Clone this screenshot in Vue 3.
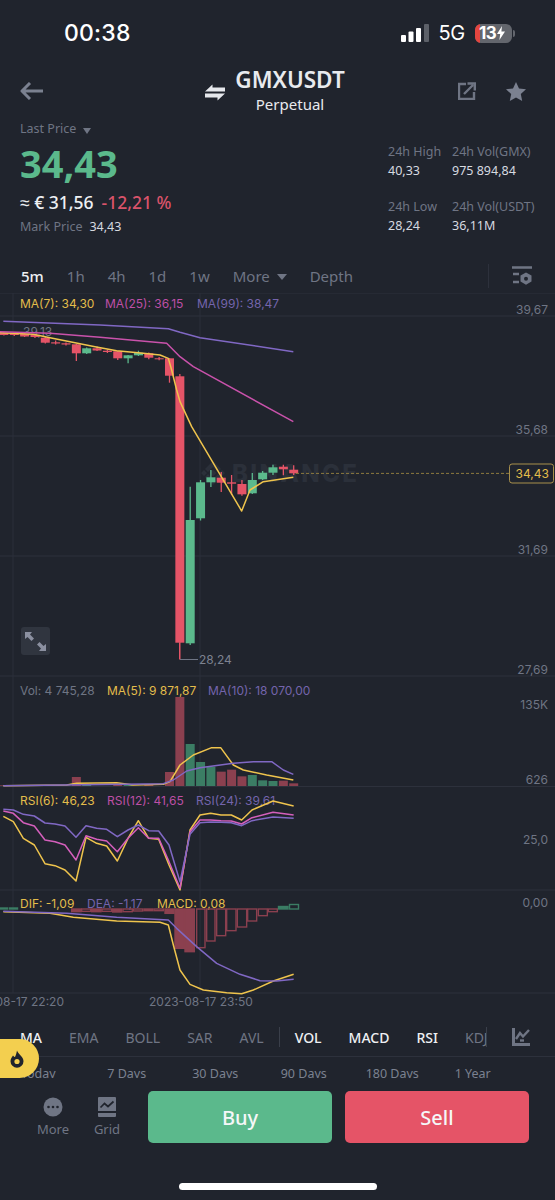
<template>
  <div class="screen">
    <div class="status">
      <span class="time">00:38</span>
      <div class="status-right">
        <svg class="signal" viewBox="0 0 28 18" width="28" height="18">
          <rect x="0" y="11" width="5" height="7" rx="1" fill="#fff" />
          <rect x="7.5" y="7.5" width="5" height="10.5" rx="1" fill="#fff" />
          <rect x="15" y="4" width="5" height="14" rx="1" fill="#fff" />
          <rect x="23" y="0" width="5" height="18" rx="1" fill="#5c6068" />
        </svg>
        <span class="net">5G</span>
        <div class="battery">
          <span class="battery-low"></span>
          <span class="battery-text">13</span>
          <svg viewBox="0 0 8 14" width="8" height="14"><path d="M5 0 L0 8 H3.2 L2.4 14 L8 5.5 H4.4 Z" fill="#fff" /></svg>
        </div>
        <span class="battery-nub"></span>
      </div>
    </div>

    <header class="top">
      <svg class="back" viewBox="0 0 24 18" width="24" height="18">
        <path d="M23 9 H2 M10 1 L2 9 L10 17" fill="none" stroke="#7b8190" stroke-width="3" stroke-linejoin="round" />
      </svg>
      <div class="title-wrap">
        <svg class="swap" viewBox="0 0 20 17" width="20" height="17">
          <path d="M0 7.4 L7.5 0.5 V3.4 H20 V7.4 Z M20 9.6 L12.5 16.5 V13.6 H0 V9.6 Z" fill="#e6e8ec" />
        </svg>
        <div class="title-text">
          <div class="symbol">GMXUSDT</div>
          <div class="kind">Perpetual</div>
        </div>
      </div>
      <div class="top-actions">
        <svg viewBox="0 0 18 18" width="18" height="18">
          <path d="M8 2 H1 V17 H16 V10" fill="none" stroke="#6f7584" stroke-width="2.4" />
          <path d="M6 12 L15 3 M9.5 1.5 H16.8 V8.5" fill="none" stroke="#6f7584" stroke-width="2.4" />
        </svg>
        <svg viewBox="0 0 20 19" width="20" height="19">
          <path d="M10 0 L13 6.4 L20 7.2 L14.8 12 L16.2 19 L10 15.5 L3.8 19 L5.2 12 L0 7.2 L7 6.4 Z" fill="#7b8190" />
        </svg>
      </div>
    </header>

    <section class="price">
      <div class="price-left">
        <div class="last-label">Last Price <i class="tri"></i></div>
        <div class="last-value">34,43</div>
        <div class="fiat-row"><span class="fiat">≈ € 31,56</span><span class="change">-12,21 %</span></div>
        <div class="mark-row"><span class="mark-label">Mark Price</span><span class="mark-value">34,43</span></div>
      </div>
      <div class="stats">
        <div v-for="s in stats" :key="s.label" class="stat">
          <div class="stat-label">{{ s.label }}</div>
          <div class="stat-value">{{ s.value }}</div>
        </div>
      </div>
    </section>

    <nav class="tabs">
      <span v-for="t in intervals" :key="t" class="tab" :class="{ active: t === '5m' }">{{ t }}</span>
      <span class="tab more">More <i class="tri big"></i></span>
      <span class="tab">Depth</span>
      <span class="tab-sep"></span>
      <svg class="tab-icon" viewBox="0 0 20 20" width="20" height="20">
        <path d="M0 1.5 H20 M1 8 H7 M1 16 H7" stroke="#6f7584" stroke-width="2.6" fill="none" />
        <path d="M14 6.5 L19.5 9.5 V15.5 L14 18.8 L8.5 15.5 V9.5 Z" fill="#6f7584" />
        <circle cx="14" cy="12.7" r="2" fill="#20242d" />
      </svg>
    </nav>

    <div class="chart">
      <svg viewBox="0 293 555 725" width="555" height="725">
        <!-- grid -->
        <line v-for="y in gridY" :key="y" x1="0" x2="555" :y1="y" :y2="y" stroke="#2d313c" />
        <line v-for="x in [13, 200]" :key="x" :x1="x" :x2="x" y1="293" y2="993" stroke="#2b2f3a" />

        <!-- watermark -->
        <path d="M213 461 L221 469 L218 472 L213 467 L208 472 L205 469 Z M201 473 L204 470 L207 473 L204 476 Z M225 473 L222 470 L219 473 L222 476 Z M213 469.5 L216.5 473 L213 476.5 L209.5 473 Z M208 474 L213 479 L218 474 L221 477 L213 485 L205 477 Z" fill="#2b303a" />
        <text x="232" y="482" class="mark-text">BINANCE</text>

        <!-- main candles -->
        <text x="23" y="336" class="axis">39,13</text>
        <g v-for="c in candles" :key="c.x">
          <line :x1="c.x" :x2="c.x" :y1="c.wt" :y2="c.wb" :stroke="c.color" stroke-width="1.3" />
          <rect :x="c.x - 4.5" :y="c.top" width="9" :height="c.h" :fill="c.color" />
        </g>
        <polyline :points="maYellow" class="ln" stroke="#efc44d" />
        <polyline :points="maPink" class="ln" stroke="#c952ab" />
        <polyline :points="maPurple" class="ln" stroke="#8068c4" />

        <line x1="296" x2="509" y1="473.4" y2="473.4" stroke="#8d7a3f" stroke-dasharray="3 2" />
        <rect x="509.5" y="464" width="44" height="19" rx="2.5" fill="#20242d" stroke="#a8904c" />
        <text x="549" y="478" class="axis-end price-tag">34,43</text>

        <path d="M179.5 643 V659.5" stroke="#e55467" fill="none" />
        <path d="M180 659.5 H198" stroke="#6f7584" fill="none" />
        <text x="199" y="664" class="axis low">28,24</text>

        <rect x="21" y="627" width="29" height="28" rx="3" fill="#30353f" />
        <path d="M25 632 H32 L30 634.5 L34 638.5 L31.5 641 L27.5 637 L25 639 Z M46 651 H39 L41 648.5 L37 644.5 L39.5 642 L43.5 646 L46 644 Z" fill="#8b90a0" />

        <text v-for="a in axisLabels" :key="a.t" x="548" :y="a.y" class="axis-end">{{ a.t }}</text>

        <!-- legends -->
        <text v-for="l in legends" :key="l.t" :x="l.x" :y="l.y" class="legend" :fill="l.c">{{ l.t }}</text>

        <!-- volume -->
        <rect v-for="b in volBars" :key="'v' + b.x" :x="b.x - 4.5" :y="b.y" width="9" :height="786 - b.y" :fill="b.color" />
        <polyline :points="volMa5" class="ln" stroke="#efc44d" />
        <polyline :points="volMa10" class="ln" stroke="#8068c4" />

        <!-- rsi -->
        <polyline :points="rsi6" class="ln" stroke="#efc44d" />
        <polyline :points="rsi12" class="ln" stroke="#d45fbc" />
        <polyline :points="rsi24" class="ln" stroke="#8068c4" />

        <!-- macd -->
        <rect v-for="b in macdBars" :key="'m' + b.x" :x="b.x" :y="b.y" :width="b.w" :height="b.h"
              :fill="b.fill" :stroke="b.stroke" stroke-width="1.4" />
        <polyline :points="dif" class="ln" stroke="#efc44d" />
        <polyline :points="dea" class="ln" stroke="#8068c4" />

        <text x="64" y="1006" class="axis date-end">2023-08-17 22:20</text>
        <text x="149" y="1006" class="axis">2023-08-17 23:50</text>
      </svg>
    </div>

    <nav class="indicators">
      <span v-for="t in mainInd" :key="t" class="ind" :class="{ active: t === 'MA' }">{{ t }}</span>
      <span class="ind-sep"></span>
      <span v-for="t in subInd" :key="t" class="ind" :class="{ active: t !== 'KDJ', cut: t === 'KDJ' }">{{ t }}</span>
      <span class="ind-sep end"></span>
      <svg class="ind-icon" viewBox="0 0 18 18" width="18" height="18">
        <path d="M1.5 0 V16.5 H18" fill="none" stroke="#6f7584" stroke-width="3" />
        <path d="M4 11 L8 5 L11 8.5 L17 2" fill="none" stroke="#6f7584" stroke-width="2.4" />
        <path d="M8 12.5 H12" stroke="#6f7584" stroke-width="2.4" />
      </svg>
    </nav>

    <div class="ranges">
      <span v-for="r in ranges" :key="r" class="range">{{ r }}</span>
    </div>

    <div class="actions">
      <div class="action-link">
        <svg viewBox="0 0 20 20" width="20" height="20">
          <circle cx="10" cy="10" r="9.5" fill="#6f7584" />
          <circle cx="5.5" cy="10" r="1.3" fill="#20242d" />
          <circle cx="10" cy="10" r="1.3" fill="#20242d" />
          <circle cx="14.5" cy="10" r="1.3" fill="#20242d" />
        </svg>
        <span>More</span>
      </div>
      <div class="action-link">
        <svg viewBox="0 0 18 20" width="18" height="20">
          <path d="M0 1 Q0 0 1 0 H17 Q18 0 18 1 V14 H0 Z M0 16 H18 V19 Q18 20 17 20 H1 Q0 20 0 19 Z" fill="#6f7584" />
          <path d="M2.5 10.5 L6.5 6.5 L10 9.5 L15.5 4.5" fill="none" stroke="#20242d" stroke-width="1.7" />
        </svg>
        <span>Grid</span>
      </div>
      <button class="btn buy">Buy</button>
      <button class="btn sell">Sell</button>
    </div>

    <div class="home"></div>

    <div class="sticker">
      <svg viewBox="0 0 14 18" width="14" height="18">
        <path d="M7 0.5 C8 4 13.5 6.5 13.5 11.2 A6.5 6.5 0 0 1 0.5 11.2 C0.5 8.5 2 7.5 3 5.5 C4 6.5 4.5 7 5 7 C6 5 6.5 3 7 0.5 Z" fill="#20242d" />
        <circle cx="7" cy="11.5" r="2.6" fill="#f3cf4f" />
      </svg>
    </div>
  </div>
</template>

<script setup>
const GREEN = '#5bb98c'
const RED = '#e55467'
const DARK_RED = '#8b404f'
const DARK_GREEN = '#3b7d64'

const stats = [
  { label: '24h High', value: '40,33' },
  { label: '24h Vol(GMX)', value: '975 894,84' },
  { label: '24h Low', value: '28,24' },
  { label: '24h Vol(USDT)', value: '36,11M' }
]
const intervals = ['5m', '1h', '4h', '1d', '1w']
const mainInd = ['MA', 'EMA', 'BOLL', 'SAR', 'AVL']
const subInd = ['VOL', 'MACD', 'RSI', 'KDJ']
const ranges = ['Today', '7 Days', '30 Days', '90 Days', '180 Days', '1 Year']

const gridY = [293, 316, 436, 556, 676, 786.5, 890, 993]
const axisLabels = [
  { t: '39,67', y: 314 },
  { t: '35,68', y: 434 },
  { t: '31,69', y: 554 },
  { t: '27,69', y: 674 },
  { t: '135K', y: 709 },
  { t: '626', y: 784 },
  { t: '25,0', y: 844 },
  { t: '0,00', y: 907 }
]
const legends = [
  { t: 'MA(7): 34,30', x: 20, y: 308, c: '#e3bd4b' },
  { t: 'MA(25): 36,15', x: 105, y: 308, c: '#bd4fa6' },
  { t: 'MA(99): 38,47', x: 197, y: 308, c: '#7464ac' },
  { t: 'Vol: 4 745,28', x: 20, y: 695, c: '#6f7584' },
  { t: 'MA(5): 9 871,87', x: 107, y: 695, c: '#e3bd4b' },
  { t: 'MA(10): 18 070,00', x: 208, y: 695, c: '#7464ac' },
  { t: 'RSI(6): 46,23', x: 20, y: 805, c: '#e3bd4b' },
  { t: 'RSI(12): 41,65', x: 107, y: 805, c: '#bd4fa6' },
  { t: 'RSI(24): 39,61', x: 196, y: 805, c: '#7464ac' },
  { t: 'DIF: -1,09', x: 20, y: 908, c: '#e3bd4b' },
  { t: 'DEA: -1,17', x: 87, y: 908, c: '#7464ac' },
  { t: 'MACD: 0,08', x: 157, y: 908, c: '#e3bd4b' }
]

const cx = (i) => 3.9 + 10.35 * i

// i, body top, body bottom, wick top, wick bottom (page y), colour
const raw = [
  [0, 332.7, 335, 332, 335.5, RED], [1, 333.3, 335, 332.5, 336, RED],
  [2, 334, 336.5, 333, 337, RED], [3, 335, 337, 334, 338, RED],
  [4, 337.7, 342.7, 337, 343.5, RED], [5, 342.3, 343.5, 340.5, 344.5, RED],
  [6, 343.3, 344.5, 342.5, 345.5, RED], [7, 344.3, 353.3, 344, 361, RED],
  [8, 348.3, 353.3, 347.5, 354, GREEN], [9, 348.3, 350.5, 346.5, 351, RED],
  [10, 350.7, 352, 349.5, 353, RED], [11, 351.3, 358.3, 351, 360, RED],
  [12, 355.3, 358.3, 355, 363.3, GREEN], [13, 352.7, 355.3, 350.7, 356, GREEN],
  [14, 353.3, 357.7, 352.5, 359.3, RED], [15, 358.3, 359.3, 357, 360.3, RED],
  [16, 358.3, 375.7, 358, 382.7, RED], [17, 376.3, 642.7, 374, 659, RED],
  [18, 520, 643.3, 486.7, 645, GREEN], [19, 482.3, 518.3, 480, 520.5, GREEN],
  [20, 477.3, 482.3, 470, 487, GREEN], [21, 477.7, 482.7, 472, 492, RED],
  [22, 482.3, 483.7, 475, 495, RED], [23, 484, 494.3, 480, 495.7, RED],
  [24, 480, 493.3, 473, 494, GREEN], [25, 472.7, 479.3, 471, 480, GREEN],
  [26, 467.3, 472.7, 464.7, 475, GREEN], [27, 466.7, 469.3, 464.7, 475.3, RED],
  [28, 469.7, 473.3, 465.3, 475, RED]
]
const candles = raw.map(([i, top, bot, wt, wb, color]) => ({
  x: cx(i), top, h: bot - top, wt, wb, color
}))

// curves are read off 3x crops, so they convert back from crop coords
const line = (ox, oy, list) => list.map(([x, y]) => `${ox + x / 3},${oy + y / 3}`).join(' ')

const maYellow = line(0, 290, [[0, 128], [100, 133], [150, 143], [210, 155], [285, 170], [350, 182], [430, 190], [480, 195], [505, 205], [515, 240], [530, 300], [540, 335], [575, 410], [725, 663], [750, 600], [790, 575], [880, 562]])
const maPink = line(0, 290, [[0, 125], [150, 130], [300, 142], [500, 160], [540, 200], [580, 230], [880, 395]])
const maPurple = line(0, 290, [[10, 94], [300, 105], [505, 116], [540, 127], [600, 143], [880, 185]])

const volTops = { 0: 331, 7: 306, 8: 328, 11: 328, 12: 328, 14: 327, 16: 291, 17: 66, 18: 207, 19: 261, 20: 275, 21: 290, 22: 284, 23: 304, 24: 300, 25: 316, 26: 318, 27: 317, 28: 325 }
const volGreen = [8, 12, 18, 19, 20, 24, 25, 26]
const volBars = Object.entries(volTops).map(([i, y]) => ({
  x: cx(+i),
  y: 675 + y / 3,
  color: volGreen.includes(+i) ? DARK_GREEN : DARK_RED
}))
const volMa5 = line(0, 675, [[10, 332], [200, 330], [230, 325], [350, 323], [400, 330], [490, 328], [510, 320], [540, 270], [580, 240], [635, 218], [662, 218], [700, 270], [730, 285], [800, 300], [880, 315]])
const volMa10 = line(0, 675, [[10, 332], [490, 326], [520, 315], [560, 288], [600, 278], [700, 265], [760, 260], [815, 260], [850, 285], [880, 298]])

const rsi6 = line(0, 675, [[10, 424], [40, 440], [70, 490], [103, 510], [135, 566], [165, 572], [195, 585], [228, 618], [258, 487], [290, 505], [320, 513], [352, 558], [384, 490], [415, 437], [446, 490], [476, 493], [507, 570], [540, 645], [570, 465], [600, 420], [632, 415], [663, 420], [694, 420], [725, 435], [756, 405], [819, 378], [881, 393]])
const rsi12 = line(0, 675, [[10, 408], [40, 415], [70, 443], [103, 453], [135, 495], [165, 500], [195, 510], [228, 555], [258, 482], [290, 493], [320, 498], [352, 530], [384, 490], [415, 458], [446, 490], [476, 490], [507, 560], [540, 640], [570, 470], [600, 435], [632, 435], [663, 437], [694, 438], [725, 447], [756, 428], [819, 412], [881, 420]])
const rsi24 = line(0, 675, [[10, 403], [40, 405], [70, 418], [103, 423], [135, 444], [165, 447], [195, 453], [228, 487], [258, 452], [290, 460], [320, 463], [352, 485], [384, 465], [415, 450], [446, 467], [476, 468], [507, 510], [540, 620], [570, 478], [600, 443], [632, 441], [663, 442], [694, 443], [725, 452], [756, 437], [819, 426], [881, 430]])

// [crop x from, crop x to, crop bottom, filled]
const macdRaw = [
  [215, 243, 80, true], [245, 272, 79, false], [275, 303, 80, true], [306, 335, 79, false],
  [338, 365, 81, true], [369, 397, 80, false], [400, 428, 78, false], [432, 458, 77, true],
  [462, 490, 77, false], [495, 522, 85, true], [525, 553, 190, true], [555, 583, 200, true],
  [590, 615, 188, false], [620, 645, 168, false], [650, 677, 152, false], [680, 708, 137, false],
  [712, 740, 126, false], [743, 770, 108, false], [775, 802, 92, false], [805, 832, 80, false]
]
const macdBars = [
  { x: 0, y: 908, w: 7.5, h: 1, fill: DARK_GREEN, stroke: DARK_GREEN },
  { x: 9.5, y: 908, w: 8, h: 1, fill: DARK_GREEN, stroke: DARK_GREEN },
  ...macdRaw.map(([a, b, bottom, filled]) => ({
    x: a / 3,
    y: 909,
    w: (b - a) / 3,
    h: (bottom - 72) / 3,
    fill: filled ? DARK_RED : 'none',
    stroke: DARK_RED
  })),
  { x: 278.5, y: 906.5, w: 9.5, h: 2.5, fill: DARK_GREEN, stroke: DARK_GREEN },
  { x: 289.5, y: 904.5, w: 9, h: 4.5, fill: 'none', stroke: DARK_GREEN }
]
const dif = line(0, 885, [[10, 80], [150, 85], [220, 97], [350, 108], [480, 112], [505, 120], [520, 180], [540, 255], [570, 298], [610, 315], [680, 323], [725, 326], [760, 315], [820, 288], [881, 268]])
const dea = line(0, 885, [[10, 79], [200, 85], [350, 97], [505, 105], [530, 130], [590, 185], [650, 235], [720, 268], [780, 287], [830, 288], [881, 283]])
</script>

<style>
html, body { background: #20242d; }
</style>

<style scoped>
.screen {
  position: relative;
  width: 555px;
  height: 1200px;
  overflow: hidden;
  background: #20242d;
  color: #fff;
  font-family: "Noto Sans", "Liberation Sans", sans-serif;
}
.status {
  display: flex;
  align-items: center;
  justify-content: space-between;
  height: 66px;
  padding: 0 40px 0 64px;
}
.time {
  font-family: Inter, sans-serif;
  font-size: 23px;
  font-weight: 500;
  letter-spacing: 0.2px;
}
.status-right {
  display: flex;
  align-items: center;
}
.net {
  margin-left: 10px;
  font-family: Inter, sans-serif;
  font-size: 20px;
  font-weight: 400;
  letter-spacing: -0.3px;
}
.battery {
  position: relative;
  display: flex;
  align-items: center;
  gap: 1px;
  width: 37px;
  height: 19px;
  margin-left: 10px;
  padding-left: 4px;
  box-sizing: border-box;
  border-radius: 6px;
  background: #63666d;
  overflow: hidden;
}
.battery-low {
  position: absolute;
  left: 0;
  top: 0;
  bottom: 0;
  width: 5px;
  background: #e5453f;
}
.battery-text {
  position: relative;
  font-family: Inter, sans-serif;
  font-size: 17px;
  font-weight: 700;
  letter-spacing: -0.6px;
}
.battery svg { position: relative; }
.battery-nub {
  width: 2px;
  height: 7px;
  margin-left: 1px;
  border-radius: 0 2px 2px 0;
  background: #63666d;
}

.top {
  display: flex;
  align-items: center;
  justify-content: space-between;
  height: 50px;
  padding: 0 29px 0 20px;
}
.title-wrap {
  display: flex;
  align-items: center;
  gap: 10px;
  margin-left: 48px;
}
.swap { margin-top: 3px; }
.title-text {
  margin-top: -1px;
  text-align: center;
}
.symbol {
  font-size: 22.5px;
  line-height: 26px;
  font-weight: 600;
  color: #e8eaee;
}
.kind {
  margin-top: 1px;
  font-size: 15px;
  line-height: 20px;
  font-weight: 400;
  color: #e8eaee;
}
.top-actions {
  display: flex;
  align-items: center;
  gap: 30px;
}

.price {
  display: flex;
  justify-content: space-between;
  align-items: flex-start;
  height: 116px;
  margin-top: 4px;
  padding: 0 13px 0 20px;
}
.last-label {
  display: flex;
  align-items: center;
  gap: 7px;
  font-size: 12.5px;
  line-height: 18px;
  color: #6f7584;
}
.tri {
  display: inline-block;
  width: 0;
  height: 0;
  margin-top: 3px;
  border-left: 4.5px solid transparent;
  border-right: 4.5px solid transparent;
  border-top: 6px solid #6f7584;
}
.tri.big {
  margin: 0 0 2px 3px;
  border-left-width: 5.5px;
  border-right-width: 5.5px;
  border-top-width: 6px;
  vertical-align: middle;
}
.last-value {
  margin-top: 3px;
  font-size: 38px;
  line-height: 44px;
  font-weight: 700;
  color: #5bb98c;
}
.fiat-row {
  display: flex;
  gap: 8px;
  margin-top: 6px;
  font-size: 17.5px;
  line-height: 22px;
  font-weight: 500;
}
.fiat { color: #eef0f3; }
.change { color: #d9536a; }
.mark-row {
  display: flex;
  gap: 7px;
  margin-top: 5px;
  line-height: 18px;
  font-size: 12.5px;
}
.mark-label { color: #6f7584; }
.mark-value { color: #d7dae0; }

.stats {
  display: grid;
  grid-template-columns: 64px 90px;
  row-gap: 18px;
  margin-top: 23px;
}
.stat-label {
  font-size: 12.5px;
  line-height: 18px;
  color: #6f7584;
  white-space: nowrap;
}
.stat-value {
  margin-top: 1px;
  font-size: 12.5px;
  line-height: 18px;
  color: #d7dae0;
  white-space: nowrap;
}

.tabs {
  display: flex;
  align-items: center;
  gap: 23px;
  height: 34px;
  margin-top: 23px;
  padding-left: 21px;
}
.tab {
  font-size: 15px;
  color: #6f7584;
}
.tab.active {
  font-weight: 500;
  color: #eef0f3;
}
.tab-sep {
  width: 1px;
  height: 24px;
  margin-left: auto;
  background: #2d313c;
}
.tab-icon {
  margin: -1px 23px 0 0;
}

.chart {
  height: 725px;
}
.chart svg {
  display: block;
}
.ln {
  fill: none;
  stroke-width: 1.5;
  stroke-linejoin: round;
}
.axis, .axis-end, .legend {
  font-family: Inter, sans-serif;
  font-size: 12px;
}
.axis { fill: #6f7584; }
.axis-end {
  fill: #6f7584;
  text-anchor: end;
}
.date-end { text-anchor: end; }
.price-tag { fill: #e3bd4b; }
.low { fill: #7d8290; }
.mark-text {
  font-family: Inter, sans-serif;
  font-size: 24px;
  font-weight: 800;
  fill: #2b303a;
  letter-spacing: 2.4px;
}

.indicators {
  display: flex;
  align-items: center;
  gap: 27px;
  height: 39px;
  padding-left: 20px;
  border-bottom: 1px solid #2d313c;
  box-sizing: border-box;
}
.ind {
  font-size: 14px;
  color: #6f7584;
}
.ind.active {
  font-weight: 500;
  color: #eef0f3;
}
.ind.cut {
  width: 21px;
  overflow: hidden;
}
.ind-sep {
  width: 1px;
  height: 20px;
  margin: 0 -12px;
  background: #3a3f4a;
}
.ind-sep.end {
  margin: 0 0 0 -27px;
}
.ind-icon {
  margin-left: -2px;
}

.ranges {
  display: flex;
  height: 21px;
  margin-left: -6px;
  padding-top: 8px;
  box-sizing: border-box;
  overflow: hidden;
}
.range {
  flex: 0 0 88.5px;
  text-align: center;
  font-size: 12.5px;
  line-height: 18px;
  color: #7b8190;
}
.range:last-child {
  margin-left: -8px;
}

.actions {
  display: flex;
  align-items: center;
  height: 52px;
  margin-top: 13px;
}
.action-link {
  display: flex;
  flex-direction: column;
  align-items: center;
  gap: 3px;
  font-size: 13px;
  line-height: 18px;
  color: #6f7584;
}
.action-link:nth-child(1) { width: 30px; margin-left: 38px; }
.action-link:nth-child(2) { width: 24px; margin: 0 29px 0 27px; }
.btn {
  width: 184px;
  height: 52px;
  border: 0;
  border-radius: 5px;
  font-family: inherit;
  font-size: 20px;
  font-weight: 500;
  color: #f5f7f8;
}
.buy { background: #5bb98c; }
.sell { margin-left: 13px; background: #e55467; }

.home {
  width: 198px;
  height: 7px;
  margin: 40px auto 0;
  border-radius: 4px;
  background: #fff;
}

.sticker {
  position: absolute;
  left: 0;
  top: 1039px;
  display: flex;
  align-items: center;
  justify-content: center;
  width: 39px;
  height: 39px;
  padding-left: 0;
  border-radius: 0 20px 20px 0;
  background: #f3cf4f;
  box-sizing: border-box;
}
.sticker svg { margin-right: 6px; }
</style>
